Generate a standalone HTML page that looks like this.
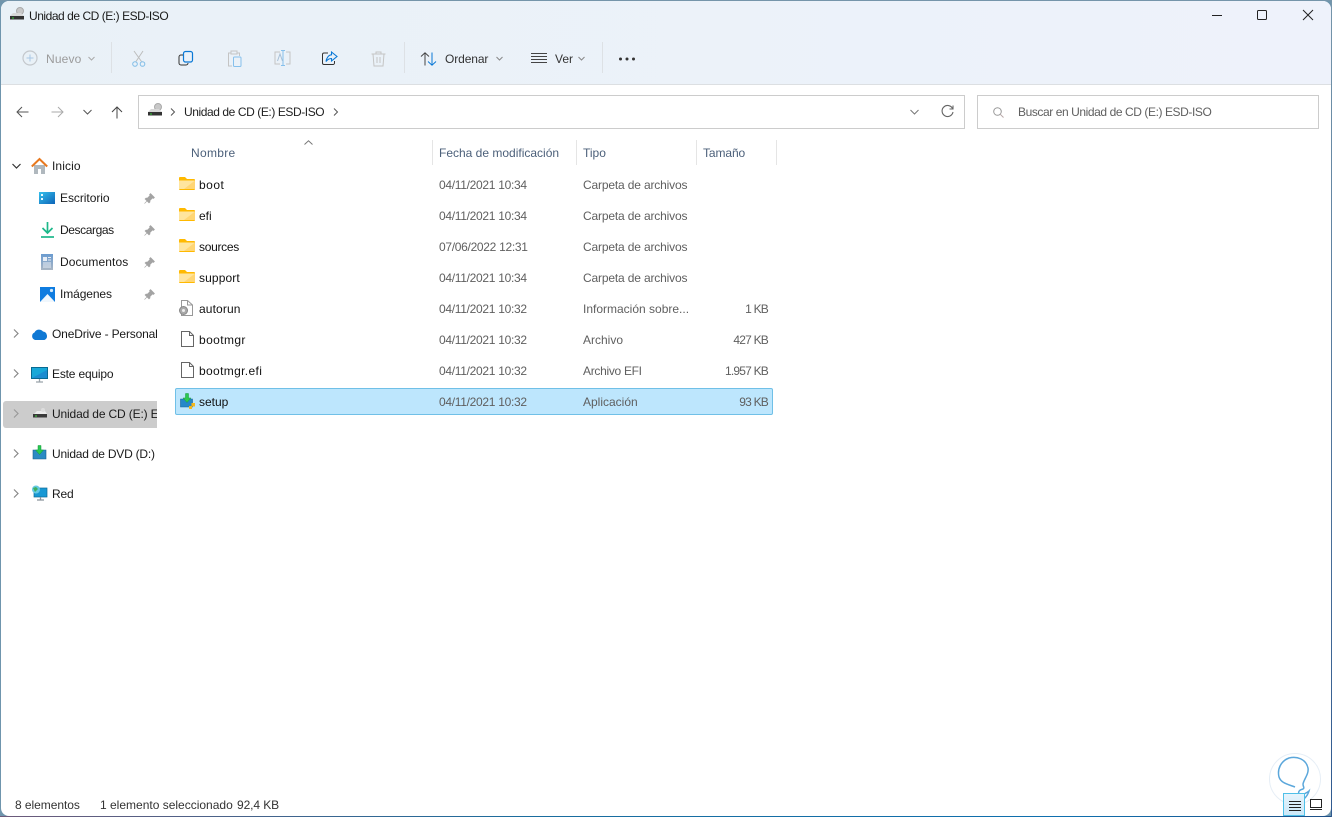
<!DOCTYPE html>
<html lang="es"><head><meta charset="utf-8"><title>Unidad de CD (E:) ESD-ISO</title>
<style>
html,body{margin:0;padding:0;width:1332px;height:817px;overflow:hidden;background:#6f95ad}
*{box-sizing:border-box}
#w{position:absolute;left:1px;top:1px;width:1330px;height:815px;background:#fff;border-radius:8px;overflow:hidden;font-family:"Liberation Sans",sans-serif;font-size:12px;color:#1a1a1a}
#bar{position:absolute;left:0;top:0;width:1330px;height:84px;background:linear-gradient(90deg,#e9f1f7,#eef2fb);border-bottom:1px solid #dcdfe2}
.t{position:absolute;white-space:nowrap;line-height:16px;height:16px}
.g{color:#5f5f5f}.h{color:#4c607a}
.d{letter-spacing:-.3px}.c{letter-spacing:-.16px}.s{letter-spacing:-.8px}
svg{position:absolute;overflow:visible}
.sep{position:absolute;width:1px;background:#dde1e5}
.box{position:absolute;background:#fff;border:1px solid #ccc}
</style></head><body>
<div style="position:absolute;left:0;top:0;width:1332px;height:1px;background:#7595aa"></div>
<div style="position:absolute;left:0;top:816px;width:1332px;height:1px;background:linear-gradient(90deg,#6d5a7a,#1a6d9e 40%,#0f6fae 80%,#1f4f86)"></div>
<div style="position:absolute;left:1331px;top:0;width:1px;height:817px;background:linear-gradient(#7595aa,#305a90)"></div>
<div id="w">
<div id="bar"></div>

<!-- title bar -->
<svg style="left:8px;top:6px" width="16" height="14" viewBox="0 0 16 14"><circle cx="11" cy="4" r="3.5" fill="#c8c8c8" stroke="#aaa"/><path d="M1 9 L4 6H12L15 9Z" fill="#d8d8d8"/><rect x="1" y="9" width="14" height="3.5" fill="#333"/><rect x="3" y="10.500" width="2" height="1" fill="#3c3"/></svg>
<div class="t" style="left:28px;top:7px;letter-spacing:-.46px">Unidad de CD (E:) ESD-ISO</div>
<div style="position:absolute;left:1211px;top:14px;width:10px;height:1px;background:#222"></div>
<div style="position:absolute;left:1256px;top:9px;width:10px;height:10px;border:1px solid #222;border-radius:1.5px"></div>
<svg style="left:1302px;top:9px" width="10" height="10" viewBox="0 0 10 10"><path d="M0 0L10 10M10 0L0 10" stroke="#222" stroke-width="1" fill="none"/></svg>

<!-- toolbar -->
<svg style="left:21px;top:49px" width="16" height="16" viewBox="0 0 16 16" fill="none"><circle cx="8" cy="8" r="7" stroke="#c4c8cc" stroke-width="1.2"/><path d="M8 4.5v7M4.5 8h7" stroke="#a9c8e4"/></svg>
<div class="t" style="left:45px;top:50px;color:#9b9b9b;letter-spacing:.15px">Nuevo</div>
<svg style="left:87px;top:55px" width="7" height="5" viewBox="0 0 7 5"><path d="M.5 1L3.5 4L6.5 1" stroke="#aaa" fill="none"/></svg>
<div class="sep" style="left:110px;top:41px;height:31px"></div>
<svg style="left:130px;top:49px" width="16" height="17" viewBox="0 0 16 17" fill="none"><path d="M3 1L10.500 11.500M12 1L5 11.500" stroke="#bdbdbd"/><circle cx="4" cy="14" r="2.300" stroke="#80bde8"/><circle cx="11.500" cy="14" r="2.300" stroke="#80bde8"/></svg>
<svg style="left:177px;top:50px" width="16" height="16" viewBox="0 0 16 16" fill="none"><rect x="5.500" y=".5" width="9" height="10.500" rx="2" stroke="#0a78d6" stroke-width="1.200"/><path d="M5 4H3A2 2 0 0 0 1 6V12A2 2 0 0 0 3 14H8A2 2 0 0 0 10 12" stroke="#333"/></svg>
<svg style="left:226px;top:49px" width="15" height="17" viewBox="0 0 15 17" fill="none"><path d="M3.500 3H1.500V16H5M10 3H12.500V6" stroke="#c4c4c4"/><rect x="4" y="1" width="6" height="3" stroke="#c4c4c4"/><rect x="6.500" y="7" width="7.500" height="9.500" rx="1" stroke="#86c0ec"/></svg>
<svg style="left:273px;top:49px" width="17" height="17" viewBox="0 0 17 17" fill="none"><path d="M6 2H1V14H6M12 2H16V14H12" stroke="#c4c4c4"/><path d="M9 .5V15.500M7 .5H11M7 15.500H11" stroke="#86c0ec"/><path d="M3.500 11L6 4L8.500 11" stroke="#a6bfd6"/></svg>
<svg style="left:321px;top:50px" width="16" height="15" viewBox="0 0 16 15" fill="none"><path d="M6 2H2A1.500 1.500 0 0 0 .5 3.500V12A1.500 1.500 0 0 0 2 13.500H11A1.500 1.500 0 0 0 12.500 12V10" stroke="#333"/><path d="M9.500 1L15 5.500L9.500 10V7.500C7 7.500 5.500 8.500 4 10.500C4.500 7 6.500 4 9.500 3.800Z" stroke="#0a78d6" stroke-width="1.100"/></svg>
<svg style="left:370px;top:50px" width="15" height="16" viewBox="0 0 15 16" fill="none"><path d="M.5 3H14.500M5 3V1H10V3M2 3L3 15H12L13 3M6 6V12M9 6V12" stroke="#c4c4c4"/></svg>
<div class="sep" style="left:403px;top:41px;height:31px"></div>
<svg style="left:419px;top:51px" width="17" height="14" viewBox="0 0 17 14" fill="none"><path d="M5 13.500V.8M1 4.500L5 .8L9 4.500" stroke="#444"/><path d="M12 .5V13M8 9.500L12 13.200L16 9.500" stroke="#0a78d6"/></svg>
<div class="t" style="left:444px;top:50px;letter-spacing:-.1px;color:#333">Ordenar</div>
<svg style="left:495px;top:55px" width="7" height="5" viewBox="0 0 7 5"><path d="M.5 1L3.500 4L6.500 1" stroke="#888" fill="none"/></svg>
<svg style="left:530px;top:52px" width="16" height="11" viewBox="0 0 16 11" fill="none"><path d="M0 .5H16M0 3.500H16M0 6.500H16M0 9.500H16" stroke="#444"/></svg>
<div class="t" style="left:554px;top:50px;color:#333">Ver</div>
<svg style="left:577px;top:55px" width="7" height="5" viewBox="0 0 7 5"><path d="M.5 1L3.500 4L6.500 1" stroke="#888" fill="none"/></svg>
<div class="sep" style="left:601px;top:41px;height:31px"></div>
<svg style="left:618px;top:56px" width="16" height="4" viewBox="0 0 16 4" fill="#333"><circle cx="1.500" cy="2" r="1.500"/><circle cx="8" cy="2" r="1.500"/><circle cx="14.500" cy="2" r="1.500"/></svg>

<!-- nav -->
<svg style="left:15px;top:105px" width="13" height="12" viewBox="0 0 13 12" fill="none"><path d="M12.500 6H1M6 1L1 6L6 11" stroke="#555"/></svg>
<svg style="left:50px;top:105px" width="13" height="12" viewBox="0 0 13 12" fill="none"><path d="M.5 6H12M7 1L12 6L7 11" stroke="#aaa"/></svg>
<svg style="left:82px;top:108px" width="9" height="6" viewBox="0 0 9 6" fill="none"><path d="M.5 1L4.500 5L8.500 1" stroke="#555"/></svg>
<svg style="left:110px;top:105px" width="12" height="13" viewBox="0 0 12 13" fill="none"><path d="M6 12.500V1M1 6L6 1L11 6" stroke="#444"/></svg>
<div class="box" style="left:137px;top:94px;width:827px;height:34px"></div>
<svg style="left:146px;top:102px" width="16" height="14" viewBox="0 0 16 14"><circle cx="11" cy="4" r="3.500" fill="#c8c8c8" stroke="#aaa"/><path d="M1 9 L4 6H12L15 9Z" fill="#d8d8d8"/><rect x="1" y="9" width="14" height="3.500" fill="#333"/><rect x="3" y="10.500" width="2" height="1" fill="#3c3"/></svg>
<svg style="left:169px;top:107px" width="5" height="8" viewBox="0 0 5 8" fill="none"><path d="M1 .5L4.500 4L1 7.500" stroke="#555"/></svg>
<div class="t" style="left:183px;top:103px;letter-spacing:-.42px;color:#222">Unidad de CD (E:) ESD-ISO</div>
<svg style="left:332px;top:107px" width="5" height="8" viewBox="0 0 5 8" fill="none"><path d="M1 .5L4.500 4L1 7.500" stroke="#555"/></svg>
<svg style="left:909px;top:108px" width="9" height="6" viewBox="0 0 9 6" fill="none"><path d="M.5 1L4.500 5L8.500 1" stroke="#777"/></svg>
<svg style="left:940px;top:104px" width="13" height="13" viewBox="0 0 13 13" fill="none"><path d="M11.500 3.500A5.500 5.500 0 1 0 12 7" stroke="#666" stroke-width="1.100"/><path d="M12 .5V4H8.500" stroke="#666" stroke-width="1.100"/></svg>
<div class="box" style="left:976px;top:94px;width:342px;height:34px"></div>
<svg style="left:992px;top:106px" width="11" height="11" viewBox="0 0 11 11" fill="none"><circle cx="4.500" cy="4.500" r="3.800" stroke="#999"/><path d="M7.300 7.300L10.500 10.500" stroke="#b8a8a8"/></svg>
<div class="t g" style="left:1017px;top:103px;letter-spacing:-.42px">Buscar en Unidad de CD (E:) ESD-ISO</div>

<!-- sidebar -->
<div style="position:absolute;left:2px;top:400px;width:154px;height:27px;background:#ccc;border-radius:3px 0 0 3px"></div>
<svg style="left:11px;top:162px" width="9" height="6" viewBox="0 0 9 6" fill="none"><path d="M.5 1L4.500 5L8.500 1" stroke="#333" stroke-width="1.200"/></svg>
<svg style="left:30px;top:157px" width="17" height="17" viewBox="0 0 17 17"><path d="M3 7H14V16H10V11H7V16H3Z" fill="#b0b8be"/><path d="M.8 8.500L8.500 1L16.200 8.500" fill="none" stroke="#e8781e" stroke-width="2"/></svg>
<div class="t" style="left:51px;top:157px;letter-spacing:.1px">Inicio</div>
<svg style="left:38px;top:191px" width="16" height="12" viewBox="0 0 16 12"><defs><linearGradient id="dg" x1="0" y1="0" x2="1" y2="1"><stop offset="0" stop-color="#35c0ec"/><stop offset="1" stop-color="#0d64b8"/></linearGradient></defs><rect width="16" height="12" fill="url(#dg)"/><rect x="2" y="2" width="2" height="2" fill="#e8fbff"/><rect x="2" y="6" width="2" height="2" fill="#e8fbff"/></svg>
<div class="t" style="left:59px;top:189px;letter-spacing:-.05px">Escritorio</div>
<svg style="left:40px;top:221px" width="13" height="16" viewBox="0 0 13 16" fill="none"><path d="M6.500 0V10.500M1.500 6L6.500 11L11.500 6" stroke="#1db88a" stroke-width="1.700"/><path d="M0 15H13" stroke="#1db88a" stroke-width="1.700"/></svg>
<div class="t" style="left:59px;top:221px;letter-spacing:-.4px">Descargas</div>
<svg style="left:40px;top:253px" width="12" height="16" viewBox="0 0 12 16"><defs><linearGradient id="dc" x1="0" y1="0" x2="0" y2="1"><stop offset="0" stop-color="#6a9bd0"/><stop offset="1" stop-color="#aab6c4"/></linearGradient></defs><rect width="12" height="16" fill="url(#dc)"/><path d="M2 3H6V7H2Z" fill="#e8eef6"/><path d="M7 3.500H10M7 6H10M2 9H10M2 11H10M2 13H10" stroke="#e8eef6" fill="none"/></svg>
<div class="t" style="left:59px;top:253px;letter-spacing:.1px">Documentos</div>
<svg style="left:39px;top:286px" width="15" height="15" viewBox="0 0 15 15"><rect width="15" height="15" fill="#0f7ce0"/><path d="M0 15L7.500 7L15 15Z" fill="#f0f7fd"/><circle cx="11.500" cy="3.500" r="1.600" fill="#cfe8fb"/></svg>
<div class="t" style="left:59px;top:285px;letter-spacing:-.1px">Imágenes</div>
<svg style="left:143px;top:192px" width="11" height="11" viewBox="0 0 11 11"><path d="M6.500 .5L10.500 4.500L9.500 5.500L8.500 5L6 7.500V9L5 10L1 6L2 5H3.500L6 2.500L5.500 1.500ZM3 8L.5 10.500" fill="#a3a3a3" stroke="#a3a3a3" stroke-width=".6"/></svg>
<svg style="left:143px;top:224px" width="11" height="11" viewBox="0 0 11 11"><path d="M6.500 .5L10.500 4.500L9.500 5.500L8.500 5L6 7.500V9L5 10L1 6L2 5H3.500L6 2.500L5.500 1.500ZM3 8L.5 10.500" fill="#a3a3a3" stroke="#a3a3a3" stroke-width=".6"/></svg>
<svg style="left:143px;top:256px" width="11" height="11" viewBox="0 0 11 11"><path d="M6.500 .5L10.500 4.500L9.500 5.500L8.500 5L6 7.500V9L5 10L1 6L2 5H3.500L6 2.500L5.500 1.500ZM3 8L.5 10.500" fill="#a3a3a3" stroke="#a3a3a3" stroke-width=".6"/></svg>
<svg style="left:143px;top:288px" width="11" height="11" viewBox="0 0 11 11"><path d="M6.500 .5L10.500 4.500L9.500 5.500L8.500 5L6 7.500V9L5 10L1 6L2 5H3.500L6 2.500L5.500 1.500ZM3 8L.5 10.500" fill="#a3a3a3" stroke="#a3a3a3" stroke-width=".6"/></svg>

<svg style="left:12px;top:328px" width="6" height="9" viewBox="0 0 6 9" fill="none"><path d="M1 .5L5 4.500L1 8.500" stroke="#888" stroke-width="1.200"/></svg>
<svg style="left:30px;top:327px" width="17" height="12" viewBox="0 0 17 12"><path d="M4 12A4 4 0 0 1 3.500 4.500A5 5 0 0 1 12 3.500A4.500 4.500 0 0 1 13.500 12Z" fill="#0f78d4"/></svg>
<div class="t" style="left:51px;top:325px;letter-spacing:-.16px">OneDrive - Personal</div>
<svg style="left:12px;top:368px" width="6" height="9" viewBox="0 0 6 9" fill="none"><path d="M1 .5L5 4.500L1 8.500" stroke="#888" stroke-width="1.200"/></svg>
<svg style="left:30px;top:366px" width="17" height="16" viewBox="0 0 17 16"><rect x=".5" y=".5" width="16" height="11" fill="#18a8d8" stroke="#086a92"/><path d="M1 11L16 3V11Z" fill="#1c8cd0"/><path d="M8.500 12V14.500M5 15H12" stroke="#9aa3aa" stroke-width="1.300"/></svg>
<div class="t" style="left:51px;top:365px;letter-spacing:-.18px">Este equipo</div>
<svg style="left:12px;top:408px" width="6" height="9" viewBox="0 0 6 9" fill="none"><path d="M1 .5L5 4.500L1 8.500" stroke="#999" stroke-width="1.200"/></svg>
<svg style="left:31px;top:406px" width="16" height="12" viewBox="0 0 16 12"><path d="M2 7L5 4H13L15 7Z" fill="#ececec"/><rect x="1" y="7" width="14" height="3.500" fill="#3a3a3a"/><rect x="3" y="8.500" width="2" height="1" fill="#4d4"/><circle cx="11" cy="3" r="2" fill="#ddd"/></svg>
<div class="t" style="left:51px;top:405px;width:105px;overflow:hidden;letter-spacing:-.15px">Unidad de CD (E:) ESD-ISO</div>
<svg style="left:12px;top:448px" width="6" height="9" viewBox="0 0 6 9" fill="none"><path d="M1 .5L5 4.500L1 8.500" stroke="#888" stroke-width="1.200"/></svg>
<svg style="left:31px;top:444px" width="15" height="15" viewBox="0 0 15 15"><path d="M1 5H14V14H1Z" fill="#2a8ac4" stroke="#1a5f8e" stroke-width=".6"/><path d="M6 .5H9V5H11.500L7.500 9.500L3.500 5H6Z" fill="#28c850" stroke="#129a3a" stroke-width=".5"/></svg>
<div class="t" style="left:51px;top:445px;letter-spacing:-.22px">Unidad de DVD (D:)</div>
<svg style="left:12px;top:488px" width="6" height="9" viewBox="0 0 6 9" fill="none"><path d="M1 .5L5 4.500L1 8.500" stroke="#888" stroke-width="1.200"/></svg>
<svg style="left:30px;top:484px" width="17" height="16" viewBox="0 0 17 16"><rect x="3" y="3" width="13" height="9" fill="#1898d4" stroke="#0f6a98" stroke-width=".7"/><circle cx="5" cy="4.500" r="4" fill="#64c8e4"/><path d="M2 3L5 2L7 4L4 7Z" fill="#3db060"/><path d="M9.500 12V14.500M6 15H13" stroke="#8a949c" stroke-width="1.300"/></svg>
<div class="t" style="left:51px;top:485px;letter-spacing:-.2px">Red</div>

<!-- headers -->
<div class="t h" style="left:190px;top:144px;letter-spacing:.3px">Nombre</div>
<svg style="left:303px;top:139px" width="9" height="5" viewBox="0 0 9 5" fill="none"><path d="M.5 4.500L4.500 .8L8.500 4.500" stroke="#777"/></svg>
<div class="sep" style="left:431px;top:139px;height:25px;background:#e5e5e5"></div>
<div class="t h" style="left:438px;top:144px">Fecha de modificación</div>
<div class="sep" style="left:575px;top:139px;height:25px;background:#e5e5e5"></div>
<div class="t h" style="left:582px;top:144px">Tipo</div>
<div class="sep" style="left:695px;top:139px;height:25px;background:#e5e5e5"></div>
<div class="t h" style="left:702px;top:144px;letter-spacing:-.1px">Tamaño</div>
<div class="sep" style="left:775px;top:139px;height:25px;background:#e5e5e5"></div>

<!-- selected row -->
<div style="position:absolute;left:174px;top:387px;width:598px;height:27px;background:#bde6fd;border:1px solid #70c0e7;border-radius:2px"></div>

<!-- folders -->
<svg style="left:178px;top:176px" width="16" height="13" viewBox="0 0 16 13"><path d="M0 1A1 1 0 0 1 1 0H6L8 2H15A1 1 0 0 1 16 3V12A1 1 0 0 1 15 13H1A1 1 0 0 1 0 12Z" fill="#ffb900"/><path d="M0 3.500H16V12H0Z" fill="#ffe59e"/><path d="M16 3.500V12H5Z" fill="#ffd675"/></svg>
<svg style="left:178px;top:207px" width="16" height="13" viewBox="0 0 16 13"><path d="M0 1A1 1 0 0 1 1 0H6L8 2H15A1 1 0 0 1 16 3V12A1 1 0 0 1 15 13H1A1 1 0 0 1 0 12Z" fill="#ffb900"/><path d="M0 3.500H16V12H0Z" fill="#ffe59e"/><path d="M16 3.500V12H5Z" fill="#ffd675"/></svg>
<svg style="left:178px;top:238px" width="16" height="13" viewBox="0 0 16 13"><path d="M0 1A1 1 0 0 1 1 0H6L8 2H15A1 1 0 0 1 16 3V12A1 1 0 0 1 15 13H1A1 1 0 0 1 0 12Z" fill="#ffb900"/><path d="M0 3.500H16V12H0Z" fill="#ffe59e"/><path d="M16 3.500V12H5Z" fill="#ffd675"/></svg>
<svg style="left:178px;top:269px" width="16" height="13" viewBox="0 0 16 13"><path d="M0 1A1 1 0 0 1 1 0H6L8 2H15A1 1 0 0 1 16 3V12A1 1 0 0 1 15 13H1A1 1 0 0 1 0 12Z" fill="#ffb900"/><path d="M0 3.500H16V12H0Z" fill="#ffe59e"/><path d="M16 3.500V12H5Z" fill="#ffd675"/></svg>
<!-- files -->
<svg style="left:177px;top:299px" width="15" height="16" viewBox="0 0 15 16" fill="none"><path d="M3.500 .5H9.500L14.500 5V15.500H3.500Z" fill="#fff" stroke="#999"/><path d="M9.500 .5V5H14.500" stroke="#999"/><circle cx="5.500" cy="10.500" r="4" fill="#aaa" stroke="#888"/><circle cx="5.500" cy="10.500" r="1.500" fill="#eee"/></svg>
<svg style="left:180px;top:330px" width="13" height="16" viewBox="0 0 13 16" fill="none"><path d="M.5 .5H8.500L12.500 4.500V15.500H.5Z" stroke="#666"/><path d="M8.500 .5V4.500H12.500" stroke="#666"/></svg>
<svg style="left:180px;top:361px" width="13" height="16" viewBox="0 0 13 16" fill="none"><path d="M.5 .5H8.500L12.500 4.500V15.500H.5Z" stroke="#666"/><path d="M8.500 .5V4.500H12.500" stroke="#666"/></svg>
<svg style="left:179px;top:392px" width="16" height="17" viewBox="0 0 16 17"><path d="M.5 6H12.500V14H.5Z" fill="#2688c8" stroke="#1a6598" stroke-width=".6"/><path d="M5.500 .5H8.500V5H11L7 9.500L3 5H5.500Z" fill="#2ec850" stroke="#149a3c" stroke-width=".5"/><path d="M11.500 10H15V13.500H11.500Z M9 13H12V16H9Z" fill="#f5b81e"/></svg>

<!-- rows -->
<div class="t" style="left:198px;top:176px;color:#111;letter-spacing:.5px">boot</div>
<div class="t" style="left:198px;top:207px;color:#111">efi</div>
<div class="t" style="left:198px;top:238px;color:#111;letter-spacing:-.3px">sources</div>
<div class="t" style="left:198px;top:269px;color:#111;letter-spacing:.12px">support</div>
<div class="t" style="left:198px;top:300px;color:#111;letter-spacing:.12px">autorun</div>
<div class="t" style="left:198px;top:331px;color:#111;letter-spacing:.4px">bootmgr</div>
<div class="t" style="left:198px;top:362px;color:#111;letter-spacing:.35px">bootmgr.efi</div>
<div class="t" style="left:198px;top:393px;color:#111">setup</div>

<div class="t g d" style="left:438px;top:176px">04/11/2021 10:34</div>
<div class="t g d" style="left:438px;top:207px">04/11/2021 10:34</div>
<div class="t g d" style="left:438px;top:238px">07/06/2022 12:31</div>
<div class="t g d" style="left:438px;top:269px">04/11/2021 10:34</div>
<div class="t g d" style="left:438px;top:300px">04/11/2021 10:32</div>
<div class="t g d" style="left:438px;top:331px">04/11/2021 10:32</div>
<div class="t g d" style="left:438px;top:362px">04/11/2021 10:32</div>
<div class="t g d" style="left:438px;top:393px">04/11/2021 10:32</div>

<div class="t g c" style="left:582px;top:176px">Carpeta de archivos</div>
<div class="t g c" style="left:582px;top:207px">Carpeta de archivos</div>
<div class="t g c" style="left:582px;top:238px">Carpeta de archivos</div>
<div class="t g c" style="left:582px;top:269px">Carpeta de archivos</div>
<div class="t g" style="left:582px;top:300px">Información sobre...</div>
<div class="t g" style="left:582px;top:331px">Archivo</div>
<div class="t g" style="left:582px;top:362px;letter-spacing:-.3px">Archivo EFI</div>
<div class="t g" style="left:582px;top:393px">Aplicación</div>

<div class="t g s" style="right:563px;top:300px">1 KB</div>
<div class="t g s" style="right:563px;top:331px">427 KB</div>
<div class="t g s" style="right:563px;top:362px">1.957 KB</div>
<div class="t g s" style="right:563px;top:393px">93 KB</div>

<!-- status -->
<div class="t" style="left:14px;top:796px;color:#333;letter-spacing:-.05px">8 elementos</div>
<div class="t" style="left:99px;top:796px;color:#333">1 elemento seleccionado</div>
<div class="t" style="left:236px;top:796px;color:#333;letter-spacing:-.1px">92,4 KB</div>

<!-- watermark -->
<svg style="left:1268px;top:752px" width="52" height="52" viewBox="0 0 52 52" fill="none"><circle cx="26" cy="26" r="25.500" stroke="#e6eef6"/><path d="M26 34C18 31 12 30 10 24C8 16 12 8 20 5C28 3 37 6 39 15C40 21 35 26 34 31C34 34 36 35 34 36C30 37 29 39 30 41C33 43 39 39 40 38C39 42 37 44 35 46" stroke="#5ba7db" stroke-width="1.500"/></svg>
<!-- view toggles -->
<div style="position:absolute;left:1282px;top:792px;width:22px;height:23px;background:linear-gradient(#e6f4fc,#cbe8f8);border:1px solid #4fc0e8"></div>
<svg style="left:1288px;top:800px" width="12" height="11" viewBox="0 0 12 11" fill="none"><path d="M0 .5H12M0 3.500H12M0 6.500H12M0 9.500H12" stroke="#222"/></svg>
<svg style="left:1309px;top:798px" width="12" height="12" viewBox="0 0 12 12" fill="none"><rect x=".5" y=".5" width="11" height="8" stroke="#222"/><path d="M0 10.500H12" stroke="#222"/></svg>
</div>
</body></html>
